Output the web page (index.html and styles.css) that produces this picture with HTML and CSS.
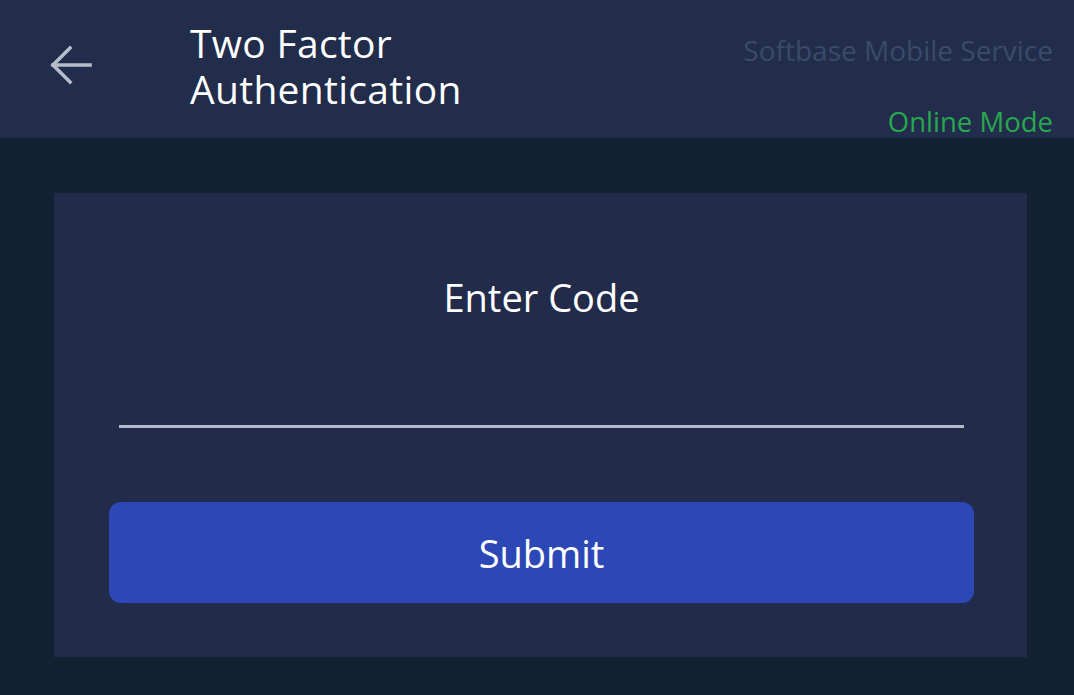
FILE: index.html
```html
<!DOCTYPE html>
<html lang="en">
<head>
<meta charset="utf-8">
<title>Two Factor Authentication</title>
<link rel="stylesheet" href="styles.css">
</head>
<body>
<header class="topbar">
  <button class="back" aria-label="Back">
    <svg width="44" height="44" viewBox="0 0 44 44" fill="none" stroke="currentColor" stroke-width="3.6" stroke-linecap="square">
      <path d="M4 22 H41"/>
      <path d="M21 5 L4 22 L21 39"/>
    </svg>
  </button>
  <h1 class="title"><span class="title-line">Two Factor</span><span class="title-line">Authentication</span></h1>
  <div class="status">
    <span class="service">Softbase Mobile Service</span>
    <span class="mode">Online Mode</span>
  </div>
</header>
<main class="content">
  <section class="card">
    <h2 class="card-title">Enter Code</h2>
    <input class="code-input" type="text" aria-label="Code">
    <button class="submit">Submit</button>
  </section>
</main>
</body>
</html>
```
FILE: styles.css
```css
html, body {
  margin: 0;
  padding: 0;
}
body {
  background: #132233;
  font-family: "Open Sans", "Noto Sans", sans-serif;
  color: #ffffff;
  width: 1074px;
  height: 695px;
  overflow: hidden;
}
.topbar {
  height: 138px;
  background: #222c4b;
  display: flex;
  align-items: flex-start;
  box-sizing: border-box;
  padding: 0 21px 0 49px;
}
.back {
  background: none;
  border: none;
  padding: 0;
  margin-top: 43px;
  color: #b7bccd;
  width: 44px;
  height: 44px;
  display: flex;
}
.title {
  margin: 20px 0 0 97px;
  font-weight: 400;
  font-size: 39px;
  line-height: 46px;
  letter-spacing: 0.3px;
  color: #ffffff;
  display: flex;
  flex-direction: column;
}
.title-line {
  display: block;
}
.status {
  margin-left: auto;
  display: flex;
  flex-direction: column;
  align-items: flex-end;
  padding-top: 32px;
}
.service {
  font-size: 28px;
  line-height: 36px;
  color: #3a4b69;
  letter-spacing: 0;
}
.mode {
  margin-top: 36px;
  font-size: 27.5px;
  line-height: 36px;
  color: #27a84f;
  letter-spacing: 0;
}
.content {
  padding: 55px 47px 0 54px;
}
.card {
  background: #222c4a;
  height: 464px;
  box-sizing: border-box;
  padding: 0 53px 0 55px;
  display: flex;
  flex-direction: column;
  align-items: stretch;
}
.card-title {
  margin: 81px 0 0;
  text-align: center;
  font-weight: 400;
  font-size: 38px;
  line-height: 46px;
  color: #ffffff;
}
.code-input {
  margin: 68px 10px 0;
  height: 40px;
  background: transparent;
  border: none;
  border-bottom: 3px solid #b3bacb;
  outline: none;
  color: #fff;
  font-size: 30px;
  box-sizing: border-box;
}
.submit {
  margin-top: 74px;
  height: 101px;
  background: #2c48b7;
  border: none;
  border-radius: 12px;
  color: #ffffff;
  font-family: inherit;
  font-size: 38px;
  font-weight: 400;
}
```
